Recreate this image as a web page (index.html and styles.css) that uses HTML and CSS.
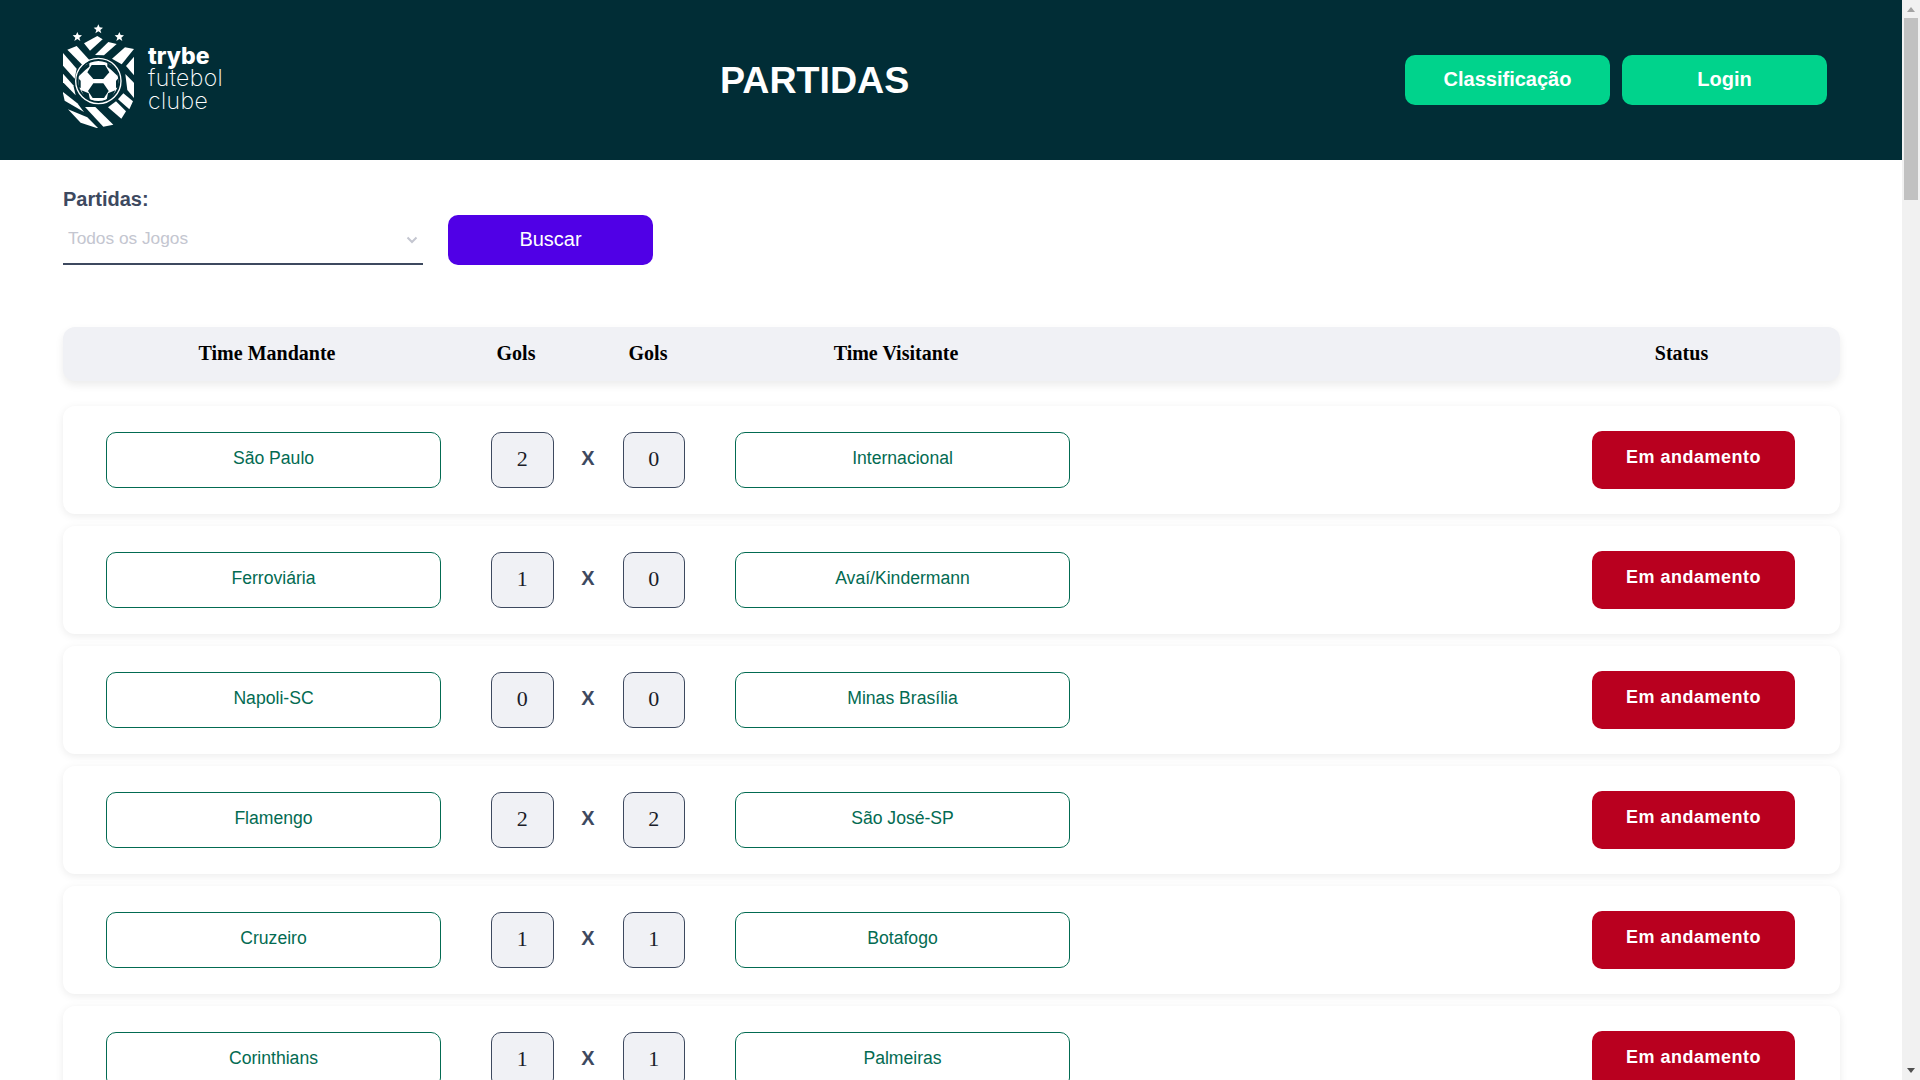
FILE: index.html
```html
<!DOCTYPE html>
<html lang="pt-BR">
<head>
<meta charset="utf-8">
<title>Partidas</title>
<link rel="stylesheet" href="styles.css">
</head>
<body>
<header class="topbar">
  <div class="brand">
    <svg class="crest" viewBox="69 42 213 312" aria-hidden="true">
      <g fill="#fff">
        <polygon points="175,43 179,52 189,53 181,60 184,70 175,64 166,70 169,60 161,53 171,52"/>
        <polygon points="112,66 116,75 126,76 118,83 121,93 112,87 103,93 106,83 98,76 108,75"/>
        <polygon points="238,66 242,75 252,76 244,83 247,93 238,87 229,93 232,83 224,76 234,75"/>
        <polygon points="132,100 172,78 188,88 150,122"/>
        <polygon points="165,135 205,96 230,102 192,136"/>
        <polygon points="216,146 255,112 282,117 245,163"/>
        <polygon points="82,119 110,108 148,150 128,166"/>
        <polygon points="68,128 110,176 104,206 68,166"/>
        <polygon points="68,190 100,226 107,256 68,216"/>
        <polygon points="68,245 112,280 132,306 74,272"/>
        <polygon points="84,298 142,322 176,356 122,338"/>
        <polygon points="135,291 166,291 220,344 190,350"/>
        <polygon points="282,140 282,196 258,168"/>
        <polygon points="256,192 282,218 282,264 262,240"/>
        <polygon points="250,250 279,274 268,298 234,268"/>
        <polygon points="228,274 258,304 244,326 204,292"/>
      </g>
      <circle cx="175" cy="213" r="68" fill="none" stroke="#fff" stroke-width="4"/>
      <circle cx="175" cy="213" r="60" fill="#fff"/>
      <g fill="#012d36">
        <polygon points="155,165 195,165 208,187 190,207 160,207 142,187"/>
        <polygon points="160,220 190,220 206,243 192,264 158,264 144,243"/>
        <polygon points="148,158 120,178 117,198 136,180 148,170"/>
        <polygon points="202,158 230,178 233,198 214,180 202,170"/>
        <polygon points="115,205 122,212 122,234 116,232"/>
        <polygon points="235,205 228,212 228,234 234,232"/>
        <polygon points="124,241 146,250 150,270 134,262"/>
        <polygon points="226,241 204,250 200,270 216,262"/>
      </g>
    </svg>
    <div class="wordmark">
      <span class="wordmark-strong">trybe</span>
      <span class="wordmark-light">futebol</span>
      <span class="wordmark-light">clube</span>
    </div>
  </div>
  <h1 class="page-title">PARTIDAS</h1>
  <nav class="nav">
    <a class="nav-btn">Classificação</a>
    <a class="nav-btn">Login</a>
  </nav>
</header>

<main class="content">
  <section class="filter">
    <div class="filter-field">
      <div class="filter-label">Partidas:</div>
      <div class="select">
        <span>Todos os Jogos</span>
        <svg class="chevron" viewBox="0 0 12 8" aria-hidden="true"><path d="M1.5 1.5 L6 6 L10.5 1.5" fill="none" stroke="#c4c6d0" stroke-width="2"/></svg>
      </div>
    </div>
    <button class="search-btn">Buscar</button>
  </section>

  <section class="table">
    <div class="table-head">
      <div>Time Mandante</div>
      <div>Gols</div>
      <div>Gols</div>
      <div>Time Visitante</div>
      <div></div>
      <div>Status</div>
    </div>

    <div class="match">
      <div class="team">São Paulo</div>
      <div class="score">2</div>
      <div class="versus">X</div>
      <div class="score">0</div>
      <div class="team team-away">Internacional</div>
      <div class="status">Em andamento</div>
    </div>
    <div class="match">
      <div class="team">Ferroviária</div>
      <div class="score">1</div>
      <div class="versus">X</div>
      <div class="score">0</div>
      <div class="team team-away">Avaí/Kindermann</div>
      <div class="status">Em andamento</div>
    </div>
    <div class="match">
      <div class="team">Napoli-SC</div>
      <div class="score">0</div>
      <div class="versus">X</div>
      <div class="score">0</div>
      <div class="team team-away">Minas Brasília</div>
      <div class="status">Em andamento</div>
    </div>
    <div class="match">
      <div class="team">Flamengo</div>
      <div class="score">2</div>
      <div class="versus">X</div>
      <div class="score">2</div>
      <div class="team team-away">São José-SP</div>
      <div class="status">Em andamento</div>
    </div>
    <div class="match">
      <div class="team">Cruzeiro</div>
      <div class="score">1</div>
      <div class="versus">X</div>
      <div class="score">1</div>
      <div class="team team-away">Botafogo</div>
      <div class="status">Em andamento</div>
    </div>
    <div class="match">
      <div class="team">Corinthians</div>
      <div class="score">1</div>
      <div class="versus">X</div>
      <div class="score">1</div>
      <div class="team team-away">Palmeiras</div>
      <div class="status">Em andamento</div>
    </div>
  </section>
</main>

<div class="scrollbar" aria-hidden="true">
  <span class="scroll-arrow scroll-arrow-up"></span>
  <span class="scroll-thumb"></span>
  <span class="scroll-arrow scroll-arrow-down"></span>
</div>
</body>
</html>
```
FILE: styles.css
```css
* { box-sizing: border-box; }

body {
  margin: 0 18px 0 0;
  background: #fff;
  font-family: "Liberation Sans", Arial, sans-serif;
}

.topbar {
  display: grid;
  grid-template-columns: 657px 1fr auto;
  align-items: center;
  height: 160px;
  padding: 0 75px 0 63px;
  background: #012d36;
  color: #fff;
}

.brand {
  display: flex;
  align-items: center;
  gap: 14px;
}

.crest {
  display: block;
  width: 71px;
  height: 104px;
  margin-top: -8px;
}

.wordmark {
  display: flex;
  flex-direction: column;
  margin-top: -3px;
  font-family: Inter, "Liberation Sans", sans-serif;
  font-size: 23px;
  font-weight: 200;
  line-height: 22.5px;
}

.wordmark-strong { font-weight: 800; }

.wordmark-light { letter-spacing: 0.4px; }

.page-title {
  margin: 0;
  padding-bottom: 1px;
  font-size: 37.6px;
  font-weight: 700;
  line-height: 44px;
}

.nav {
  display: flex;
  gap: 12px;
}

.nav-btn {
  display: flex;
  align-items: center;
  justify-content: center;
  width: 205px;
  height: 50px;
  padding-bottom: 2px;
  border-radius: 10px;
  background: #00d38c;
  color: #fff;
  font-size: 20px;
  font-weight: 700;
}

.content { padding: 0 62px 0 63px; }

.filter {
  display: flex;
  align-items: flex-end;
  gap: 25px;
  margin-top: 27px;
}

.filter-field { width: 360px; }

.filter-label {
  color: #3d495f;
  font-size: 20px;
  font-weight: 700;
  line-height: 25px;
}

.select {
  display: flex;
  align-items: center;
  justify-content: space-between;
  height: 53px;
  padding: 2px 5px 0;
  border-bottom: 2px solid #3d495f;
  color: #c4c6d0;
  font-size: 17.3px;
}

.chevron {
  display: block;
  width: 12px;
  height: 8px;
  margin-top: 3px;
}

.search-btn {
  width: 205px;
  height: 50px;
  padding: 0 0 2px;
  border: 0;
  border-radius: 10px;
  background: #5000e6;
  color: #fff;
  font-family: "Liberation Sans", Arial, sans-serif;
  font-size: 20px;
}

.table { margin-top: 62px; }

.table-head {
  display: grid;
  grid-template-columns: 408px 90px 174px 322px 1fr 317px;
  align-items: center;
  height: 54px;
  margin-bottom: 25px;
  padding-bottom: 2px;
  border-radius: 12px;
  background: #f0f1f5;
  box-shadow: 0 4px 8px rgba(0, 0, 0, 0.08);
  color: #000;
  font-family: "Liberation Serif", "Times New Roman", serif;
  font-size: 20px;
  font-weight: 700;
  text-align: center;
}

.match {
  display: flex;
  align-items: center;
  height: 108px;
  margin-bottom: 12px;
  padding: 0 45px 0 43px;
  border-radius: 12px;
  background: #fff;
  box-shadow: 0 2px 8px rgba(0, 0, 0, 0.08);
}

.team {
  display: flex;
  align-items: center;
  justify-content: center;
  width: 335px;
  height: 56px;
  padding-bottom: 4px;
  border: 1px solid #036b52;
  border-radius: 10px;
  color: #036b52;
  font-size: 17.6px;
}

.team-away { margin-left: 50px; }

.score {
  display: flex;
  align-items: center;
  justify-content: center;
  width: 62.5px;
  height: 56px;
  padding-bottom: 3px;
  border: 1px solid #3d495f;
  border-radius: 10px;
  background: #f0f1f5;
  color: #1a1d29;
  font-family: "Liberation Serif", "Times New Roman", serif;
  font-size: 22px;
}

.match > .team + .score { margin-left: 50px; }

.versus {
  width: 69px;
  padding-bottom: 4px;
  color: #3d495f;
  font-size: 20px;
  font-weight: 700;
  text-align: center;
}

.status {
  display: flex;
  align-items: center;
  justify-content: center;
  width: 203px;
  height: 58px;
  margin-left: auto;
  padding-bottom: 6px;
  border-radius: 10px;
  background: #b9001f;
  color: #fff;
  font-size: 18px;
  font-weight: 700;
  letter-spacing: 0.5px;
}

.scrollbar {
  position: fixed;
  top: 0;
  right: 0;
  bottom: 0;
  width: 18px;
  background: #f1f1f1;
}

.scroll-thumb {
  position: absolute;
  top: 18px;
  left: 2px;
  width: 14px;
  height: 182px;
  background: #c1c1c1;
}

.scroll-arrow {
  position: absolute;
  left: 5px;
  width: 0;
  height: 0;
  border-left: 4px solid transparent;
  border-right: 4px solid transparent;
}

.scroll-arrow-up {
  top: 7px;
  border-bottom: 5px solid #a3a3a3;
}

.scroll-arrow-down {
  bottom: 7px;
  border-top: 5px solid #505050;
}
```
